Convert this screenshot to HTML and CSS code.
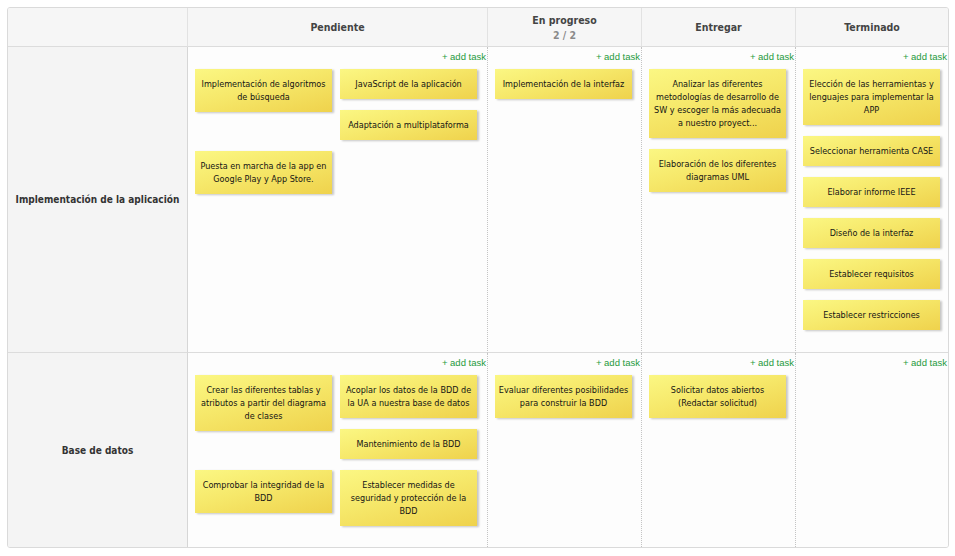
FILE: index.html
```html
<!DOCTYPE html>
<html lang="es">
<head>
<meta charset="utf-8">
<title>Tablero</title>
<link rel="stylesheet" href="styles.css">
</head>
<body>
<div class="board">
  <div class="hcell corner"></div>
  <div class="hcell"><span class="htitle">Pendiente</span></div>
  <div class="hcell"><span class="htitle">En progreso</span><span class="hcount">2 / 2</span></div>
  <div class="hcell"><span class="htitle">Entregar</span></div>
  <div class="hcell"><span class="htitle">Terminado</span></div>

  <div class="label">Implementación de la aplicación</div>
  <div class="cell">
    <div class="add">+ add task</div>
    <div class="pairs">
      <div class="stack"><div class="card">Implementación de algoritmos de búsqueda</div></div>
      <div class="stack"><div class="card">JavaScript de la aplicación</div><div class="card">Adaptación a multiplataforma</div></div>
      <div class="stack"><div class="card">Puesta en marcha de la app en Google Play y App Store.</div></div>
    </div>
  </div>
  <div class="cell">
    <div class="add">+ add task</div>
    <div class="stack"><div class="card">Implementación de la interfaz</div></div>
  </div>
  <div class="cell">
    <div class="add">+ add task</div>
    <div class="stack">
      <div class="card">Analizar las diferentes metodologías de desarrollo de SW y escoger la más adecuada a nuestro proyect...</div>
      <div class="card">Elaboración de los diferentes diagramas UML</div>
    </div>
  </div>
  <div class="cell">
    <div class="add">+ add task</div>
    <div class="stack">
      <div class="card">Elección de las herramientas y lenguajes para implementar la APP</div>
      <div class="card">Seleccionar herramienta CASE</div>
      <div class="card">Elaborar informe IEEE</div>
      <div class="card">Diseño de la interfaz</div>
      <div class="card">Establecer requisitos</div>
      <div class="card">Establecer restricciones</div>
    </div>
  </div>

  <div class="label last">Base de datos</div>
  <div class="cell last">
    <div class="add">+ add task</div>
    <div class="pairs">
      <div class="stack"><div class="card">Crear las diferentes tablas y atributos a partir del diagrama de clases</div></div>
      <div class="stack"><div class="card">Acoplar los datos de la BDD de la UA a nuestra base de datos</div><div class="card">Mantenimiento de la BDD</div></div>
      <div class="stack"><div class="card">Comprobar la integridad de la BDD</div></div>
      <div class="stack"><div class="card">Establecer medidas de seguridad y protección de la BDD</div></div>
    </div>
  </div>
  <div class="cell last">
    <div class="add">+ add task</div>
    <div class="stack"><div class="card">Evaluar diferentes posibilidades para construir la BDD</div></div>
  </div>
  <div class="cell last">
    <div class="add">+ add task</div>
    <div class="stack"><div class="card">Solicitar datos abiertos (Redactar solicitud)</div></div>
  </div>
  <div class="cell last">
    <div class="add">+ add task</div>
  </div>
</div>
</body>
</html>
```

FILE: styles.css
```css
html, body {
  margin: 0;
  padding: 0;
  background: #ffffff;
}
body {
  padding: 7px;
  font-family: "DejaVu Sans Condensed", "DejaVu Sans", sans-serif;
  font-stretch: semi-condensed;
}
.board {
  display: grid;
  grid-template-columns: 179px 300px 154px 154px 153px;
  grid-template-rows: 39px 306px 194px;
  width: 940px;
  border: 1px solid #dadada;
  border-radius: 3px;
  overflow: hidden;
  background: #fdfdfd;
}
.hcell {
  background: #f6f6f6;
  border-bottom: 1px solid #dcdcdc;
  border-left: 1px solid #e2e2e2;
  display: flex;
  flex-direction: column;
  align-items: center;
  justify-content: center;
  color: #444;
  font-weight: bold;
  font-size: 10.5px;
  line-height: 14px;
}
.hcell.corner {
  border-left: none;
}
.hcount {
  color: #8a8a8a;
  margin-top: 1px;
}
.label {
  background: #f4f4f4;
  border-bottom: 1px solid #dcdcdc;
  display: flex;
  align-items: center;
  justify-content: center;
  font-weight: bold;
  font-size: 10px;
  color: #333;
}
.cell {
  border-bottom: 1px solid #dcdcdc;
  border-left: 1px solid #d6d6d6;
  padding: 3px 1px 0 7px;
  background: #fdfdfd;
}
.cell + .cell {
  border-left: 1px dotted #c4c4c4;
}
.label + .cell {
  border-left: 1px solid #d6d6d6;
}
.last {
  border-bottom: none;
}
.add {
  font-family: "Liberation Sans", Arial, sans-serif;
  font-size: 9.5px;
  line-height: 14px;
  height: 14px;
  color: #1e9a3c;
  text-align: right;
  margin-bottom: 5px;
}
.pairs {
  display: grid;
  grid-template-columns: 137px 137px;
  column-gap: 8px;
  row-gap: 11px;
  align-items: start;
}
.stack {
  display: flex;
  flex-direction: column;
  gap: 11px;
  width: 137px;
}
.card {
  box-sizing: border-box;
  width: 137px;
  padding: 9px 3px 8px;
  font-size: 9px;
  line-height: 13px;
  color: #141414;
  text-align: center;
  background: linear-gradient(165deg, #fbf783 0%, #f6e86a 45%, #efd24c 100%);
  box-shadow: 2px 1px 2px rgba(0, 0, 0, 0.22);
}
```
